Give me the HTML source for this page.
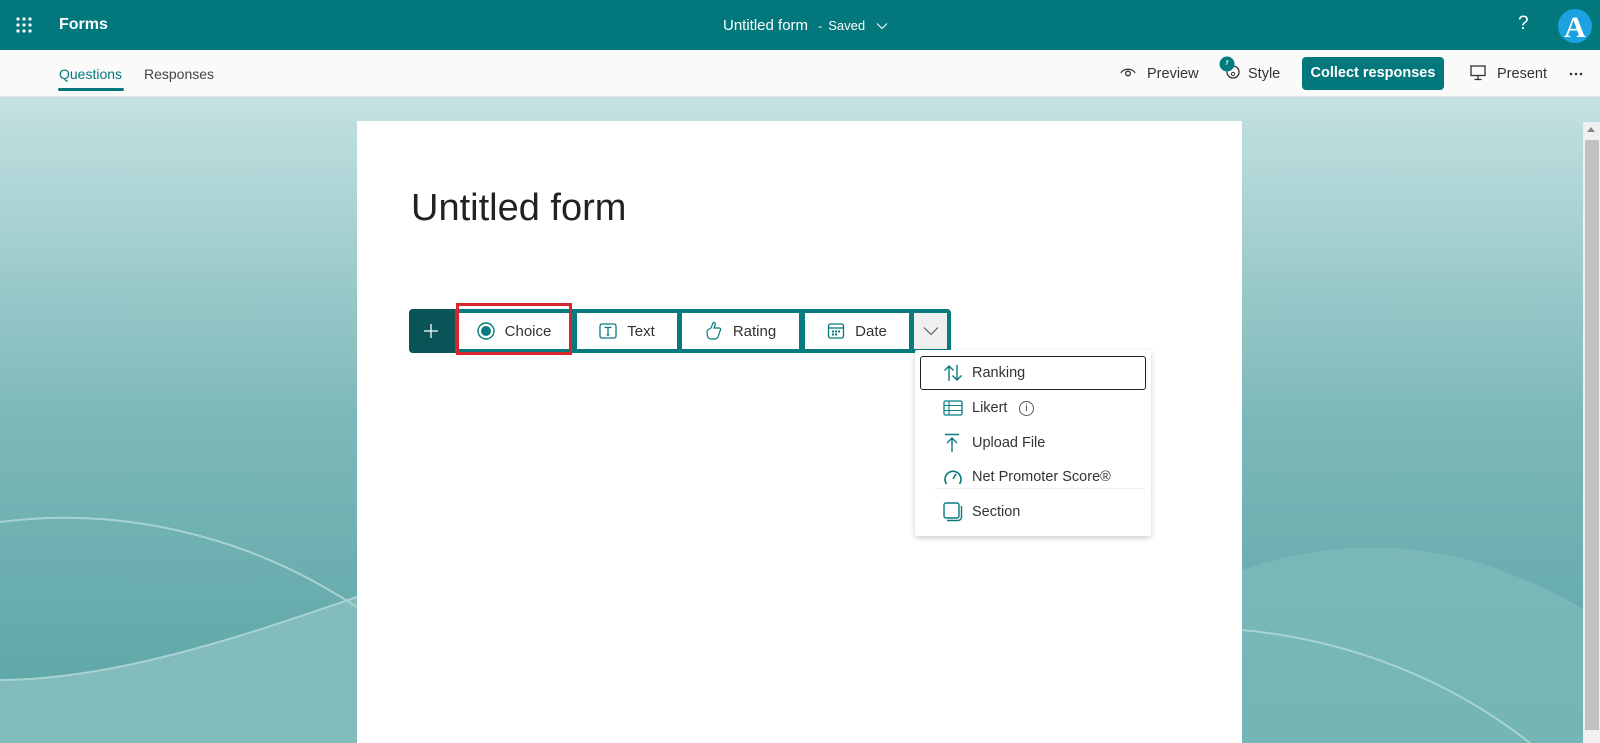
<!DOCTYPE html>
<html><head><meta charset="utf-8"><style>
*{box-sizing:border-box;margin:0;padding:0}
body{width:1600px;height:743px;overflow:hidden;font-family:"Liberation Sans",sans-serif;position:relative;background:#fff}
.hdr{position:absolute;left:0;top:0;width:1600px;height:50px;background:#03787c;color:#fff}
.nav{position:absolute;left:0;top:50px;width:1600px;height:47px;background:#fafafa;border-bottom:1px solid #e4e4e4}
.bg{position:absolute;left:0;top:97px;width:1600px;height:646px}
.card{position:absolute;left:357px;top:121px;width:885px;height:622px;background:#fff}
.tb{position:absolute;left:409px;top:309px;width:542px;height:44px;background:#077b7f;border-radius:4px}
.btn{position:absolute;top:4px;height:36px;background:#fff;font-size:15px;color:#333;display:flex;align-items:center;justify-content:center;gap:10px}
.menu{position:absolute;left:915px;top:350px;width:236px;height:186px;background:#fff;box-shadow:0 2px 6px rgba(0,0,0,.2);border-radius:2px}
.mi{position:absolute;left:0;width:236px;height:34px;font-size:14.5px;color:#333}
.mi svg{position:absolute;left:28px;top:50%;transform:translateY(-50%)}
.mi span.t{position:absolute;left:57px;top:9px;line-height:17px}
</style></head><body>
<div class="hdr">
 <svg style="position:absolute;left:16px;top:17px" width="18" height="16" viewBox="0 0 18 16" fill="#fff">
  <circle cx="2" cy="2" r="1.6"/><circle cx="8" cy="2" r="1.6"/><circle cx="14" cy="2" r="1.6"/>
  <circle cx="2" cy="8" r="1.6"/><circle cx="8" cy="8" r="1.6"/><circle cx="14" cy="8" r="1.6"/>
  <circle cx="2" cy="14" r="1.6"/><circle cx="8" cy="14" r="1.6"/><circle cx="14" cy="14" r="1.6"/></svg>
 <div style="position:absolute;left:59px;top:16px;font-size:16px;font-weight:bold">Forms</div>
 <div style="position:absolute;left:723px;top:17px;font-size:15px">Untitled form <span style="font-size:12px;margin:0 6px">-</span><span style="font-size:13px">Saved</span></div>
 <svg style="position:absolute;left:876px;top:22px" width="12" height="8" viewBox="0 0 12 8"><path d="M1 1.5l5 5 5-5" stroke="#fff" fill="none" stroke-width="1"/></svg>
 <div style="position:absolute;left:1518px;top:13px;font-size:19px;font-weight:300">?</div>
 <div style="position:absolute;left:1558px;top:9px;width:34px;height:34px;border-radius:50%;background:#1aa3e0;color:#fff;font-family:'Liberation Serif',serif;font-size:30px;font-weight:bold;text-align:center;line-height:38px">A</div>
</div>
<div class="nav">
 <div style="position:absolute;left:59px;top:16px;font-size:14px;color:#03787c">Questions</div>
 <div style="position:absolute;left:58px;top:38px;width:66px;height:3px;background:#03787c;border-radius:2px"></div>
 <div style="position:absolute;left:144px;top:16px;font-size:14px;color:#444">Responses</div>
 <svg style="position:absolute;left:1120px;top:16px" width="16" height="12" viewBox="0 0 16 12"><path d="M1 7C3 2 13 2 15 7" stroke="#333" fill="none" stroke-width="1.3"/><circle cx="8" cy="7.5" r="2.3" stroke="#333" fill="none" stroke-width="1.3"/></svg>
 <div style="position:absolute;left:1147px;top:16px;font-size:14.5px;color:#333">Preview</div>
 <svg style="position:absolute;left:1218px;top:6px" width="24" height="26" viewBox="0 0 24 26"><circle cx="15" cy="16" r="6" stroke="#333" fill="#fff" stroke-width="1.3"/><circle cx="15" cy="18" r="1.6" stroke="#333" fill="none"/><circle cx="9" cy="8" r="7.5" fill="#06797c"/><path d="M8 5l2 0-2 4" stroke="#9fd" fill="none" stroke-width="1"/></svg>
 <div style="position:absolute;left:1248px;top:16px;font-size:14.5px;color:#333">Style</div>
 <div style="position:absolute;left:1302px;top:7px;width:142px;height:33px;background:#03787c;border-radius:4px;color:#fff;font-size:14.5px;font-weight:bold;text-align:center;line-height:33px">Collect responses</div>
 <svg style="position:absolute;left:1470px;top:15px" width="16" height="16" viewBox="0 0 16 16"><rect x="1" y="1" width="14" height="9.5" stroke="#333" fill="none" stroke-width="1.3"/><path d="M8 10.5v4M4.5 14.5h7" stroke="#333" stroke-width="1.3"/></svg>
 <div style="position:absolute;left:1497px;top:16px;font-size:14.5px;color:#333">Present</div>
 <svg style="position:absolute;left:1569px;top:22px" width="14" height="4" viewBox="0 0 14 4" fill="#333"><circle cx="2" cy="2" r="1.3"/><circle cx="7" cy="2" r="1.3"/><circle cx="12" cy="2" r="1.3"/></svg>
</div>
<svg class="bg" width="1600" height="646" viewBox="0 97 1600 646">
 <defs><linearGradient id="g" x1="0" y1="0" x2="0" y2="1"><stop offset="0" stop-color="#c4e1e1"/><stop offset="0.5" stop-color="#7cb8b9"/><stop offset="1" stop-color="#5aa4a5"/></linearGradient></defs>
 <rect x="0" y="97" width="1600" height="646" fill="url(#g)"/>
 <path d="M0 680C120 680 260 630 357 597L357 743L0 743Z" fill="#82bcbd"/>
 <path d="M0 522C60 514 140 515 230 545C290 565 330 590 357 607" stroke="#a8d3d3" stroke-width="2" fill="none"/>
 <path d="M0 680C120 680 260 630 357 597" stroke="#a8d3d3" stroke-width="2" fill="none"/>
 <path d="M1242 570C1330 540 1420 540 1500 570C1540 585 1570 600 1600 620L1600 743L1242 743Z" fill="#7fbcbc" opacity="0.7"/>
 <path d="M1242 630C1350 640 1450 680 1530 743" stroke="#a8d3d3" stroke-width="2" fill="none"/>
</svg>
<div style="position:absolute;left:1583px;top:122px;width:17px;height:621px;background:#f0f0f0"></div>
<div style="position:absolute;left:1585px;top:140px;width:14px;height:590px;background:#c1c1c1"></div>
<div style="position:absolute;left:1587px;top:127px;width:0;height:0;border-left:4px solid transparent;border-right:4px solid transparent;border-bottom:5px solid #888"></div>
<div class="card">
 <div style="position:absolute;left:54px;top:66px;font-size:38px;color:#222">Untitled form</div>
</div>
<div class="tb">
 <div style="position:absolute;left:0;top:0;width:46px;height:44px;background:#0a5457;border-radius:4px 0 0 4px"></div>
 <svg style="position:absolute;left:14px;top:14px" width="16" height="16" viewBox="0 0 16 16"><path d="M8 1v14M1 8h14" stroke="#fff" stroke-width="1.3"/></svg>
 <div class="btn" style="left:49px;width:112px"><svg width="18" height="18" viewBox="0 0 18 18"><circle cx="9" cy="9" r="8" stroke="#077b7f" fill="none" stroke-width="1.4"/><circle cx="9" cy="9" r="5" fill="#077b7f"/></svg>Choice</div>
 <div class="btn" style="left:168px;width:100px"><svg width="18" height="16" viewBox="0 0 18 16"><rect x="1" y="1" width="16" height="14" rx="2" stroke="#077b7f" fill="none" stroke-width="1.3"/><path d="M5.5 4.5h7M9 4.5v7.5M7.5 12h3" stroke="#077b7f" stroke-width="1.3" fill="none"/></svg>Text</div>
 <div class="btn" style="left:273px;width:117px"><svg width="18" height="20" viewBox="0 0 18 20"><path d="M2 11c0-2 2-3 4-4l2-5c1-1 3 0 2 2l-1 3h5c2 0 2 2 1 3l-2 6c-1 2-3 2-5 2H6C3 18 2 15 2 11z" stroke="#077b7f" fill="none" stroke-width="1.2"/></svg>Rating</div>
 <div class="btn" style="left:396px;width:104px"><svg width="18" height="18" viewBox="0 0 18 18"><rect x="1.5" y="2" width="15" height="14" rx="2" stroke="#077b7f" fill="none" stroke-width="1.3"/><path d="M1.5 6h15" stroke="#077b7f" stroke-width="1.3"/><g fill="#077b7f"><rect x="5" y="8.5" width="2" height="2"/><rect x="8" y="8.5" width="2" height="2"/><rect x="11" y="8.5" width="2" height="2"/><rect x="5" y="11.5" width="2" height="2"/><rect x="8" y="11.5" width="2" height="2"/></g></svg>Date</div>
 <div class="btn" style="left:505px;width:33px;background:#f0f0f0"><svg width="16" height="10" viewBox="0 0 16 10"><path d="M1 1.5l7 7 7-7" stroke="#555" fill="none" stroke-width="1.1"/></svg></div>
</div>
<div style="position:absolute;left:456px;top:303px;width:116px;height:52px;border:3px solid #d9262e"></div>
<div class="menu">
 <div style="position:absolute;left:5px;top:6px;width:226px;height:34px;border:1.5px solid #222;border-radius:3px"></div>
 <div class="mi" style="top:6px"><svg width="20" height="18" viewBox="0 0 20 18"><path d="M6 17V2M1.5 6.5L6 2l4.5 4.5M14 1v15M9.5 11.5L14 16l4.5-4.5" stroke="#077b7f" fill="none" stroke-width="1.4"/></svg><span class="t">Ranking</span></div>
 <div class="mi" style="top:41px"><svg width="20" height="16" viewBox="0 0 20 16"><rect x="1" y="1" width="18" height="14" rx="1.5" stroke="#077b7f" fill="none" stroke-width="1.3"/><path d="M1 5.5h18M1 10.5h18M6 1v14" stroke="#077b7f" stroke-width="1.1"/></svg><span class="t">Likert</span><span style="position:absolute;left:104px;top:10px;width:15px;height:15px;border:1px solid #555;border-radius:50%;font-size:10px;text-align:center;line-height:13px">i</span></div>
 <div class="mi" style="top:76px"><svg width="18" height="20" viewBox="0 0 18 20"><path d="M2 1.5h14M9 19V5M4 10l5-5 5 5" stroke="#077b7f" fill="none" stroke-width="1.4"/></svg><span class="t">Upload File</span></div>
 <div class="mi" style="top:110px"><svg width="20" height="18" viewBox="0 0 20 18"><path d="M3.5 16A8 8 0 1 1 16.5 16" stroke="#077b7f" fill="none" stroke-width="1.6"/><path d="M10 11l3-5" stroke="#077b7f" stroke-width="1.6"/></svg><span class="t">Net Promoter Score®</span></div>
 <div style="position:absolute;left:20px;top:138px;width:210px;height:1px;background:#eee"></div>
 <div class="mi" style="top:145px"><svg width="20" height="20" viewBox="0 0 20 20"><rect x="1" y="1" width="15" height="15" rx="2" stroke="#077b7f" fill="none" stroke-width="1.4"/><path d="M4 18.5h11a3.5 3.5 0 0 0 3.5-3.5V4" stroke="#077b7f" fill="none" stroke-width="1.4"/></svg><span class="t">Section</span></div>
</div>
</body></html>
